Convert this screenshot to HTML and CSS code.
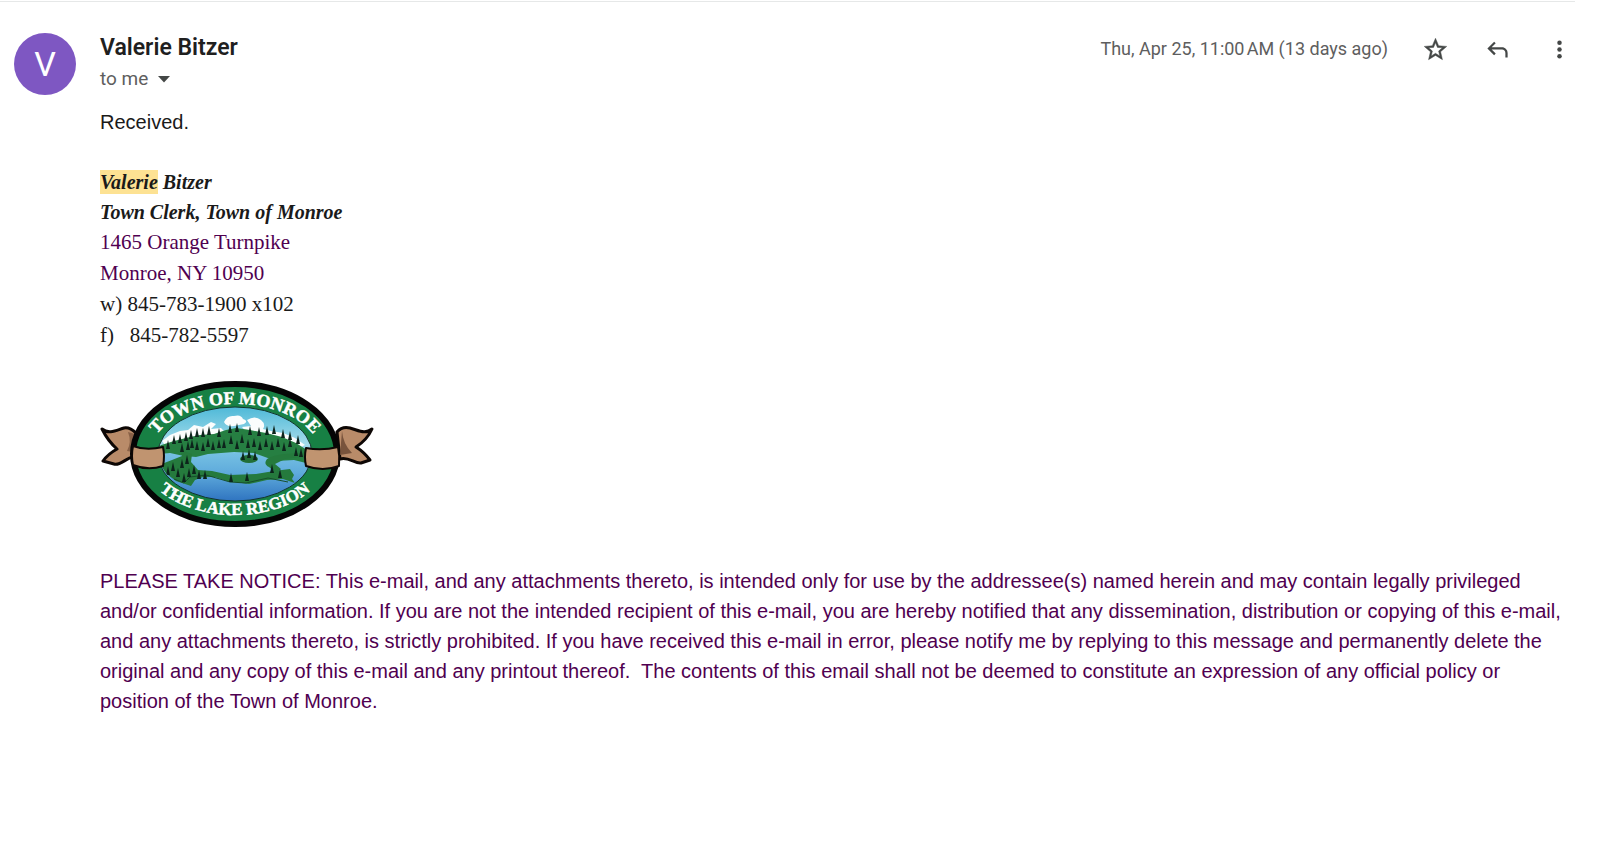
FILE: index.html
```html
<!DOCTYPE html>
<html lang="en">
<head>
    <meta charset="UTF-8">
    <meta name="viewport" content="width=device-width, initial-scale=1.0">
    <title>Valerie Bitzer</title>
    <link rel="stylesheet" href="styles.css">
</head>
<body>
    <article class="message">
        <div class="avatar">V</div>
        <div class="content">
            <header class="header">
                <div class="sender">
                    <h3 class="name">Valerie Bitzer</h3>
                    <button class="recipients" type="button">
                        to me
                        <svg class="caret" viewBox="0 0 12 7" aria-hidden="true"><path d="M0 0h12L6 6.5z"/></svg>
                    </button>
                </div>
                <div class="meta">
                    <time class="date" datetime="2024-04-25T11:00">Thu, Apr 25, 11:00&#8239;AM (13 days ago)</time>
                    <button class="icon-btn" type="button" aria-label="Star">
                        <svg viewBox="0 0 24 24" stroke="currentColor" stroke-width="0.4"><path d="M22 9.24l-7.19-.62L12 2 9.19 8.63 2 9.24l5.46 4.73L5.82 21 12 17.27 18.18 21l-1.63-7.03L22 9.24zM12 15.4l-3.76 2.27 1-4.28-3.32-2.88 4.38-.38L12 6.1l1.71 4.04 4.38.38-3.32 2.88 1 4.28L12 15.4z"/></svg>
                    </button>
                    <button class="icon-btn" type="button" aria-label="Reply">
                        <svg viewBox="0 0 24 24"><path d="M19 19v-4c0-.83-.29-1.54-.88-2.12A2.89 2.89 0 0 0 16 12H6.83l3.59 3.6L9 17l-6-6 6-6 1.42 1.4L6.83 10H16c1.38 0 2.56.49 3.54 1.46A4.82 4.82 0 0 1 21 15v4z"/></svg>
                    </button>
                    <button class="icon-btn" type="button" aria-label="More">
                        <svg viewBox="0 0 24 24"><circle cx="12" cy="6" r="2"/><circle cx="12" cy="12" r="2"/><circle cx="12" cy="18" r="2"/></svg>
                    </button>
                </div>
            </header>

            <p class="text">Received.</p>

            <div class="signature">
                <p class="title"><mark>Valerie</mark> Bitzer</p>
                <p class="title">Town Clerk, Town of Monroe</p>
                <p class="address">1465 Orange Turnpike</p>
                <p class="address">Monroe, NY 10950</p>
                <p>w) 845-783-1900 x102</p>
                <p>f)&nbsp;&nbsp; 845-782-5597</p>
            </div>

            <svg class="logo" viewBox="0 0 274 148" role="img" aria-label="Town of Monroe, The Lake Region">
                <defs>
                    <linearGradient id="sky" x1="0" y1="0" x2="0" y2="1">
                        <stop offset="0" stop-color="#4fb9d8"/>
                        <stop offset="0.4" stop-color="#a5dcea"/>
                        <stop offset="0.5" stop-color="#74bfe2"/>
                        <stop offset="0.7" stop-color="#5fabdc"/>
                        <stop offset="1" stop-color="#2f74c0"/>
                    </linearGradient>
                    <clipPath id="scene"><ellipse cx="135" cy="74" rx="76" ry="46"/></clipPath>
                    <path id="arcTop" d="M50 74a85 50 0 0 1 170 0"/>
                    <path id="arcBottom" d="M40 73a95 62 0 0 0 190 0"/>
                    <path id="tree" d="M0-5L2 4H-2z"/>
                </defs>

                <!-- ribbon tails -->
                <g fill="#b98b69" stroke="#0d0705" stroke-width="3" stroke-linejoin="round">
                    <path d="M2 49C9 55 17 50 24 48Q30 47 36 53L33 77C26 78 20 86 14 84L3 81Q8 74 17 69Q8 61 2 49z"/>
                    <path d="M272 49C265 55 258 50 250 48Q242 46 237 52L240 79C248 76 255 84 261 83L270 80Q264 72 256 67Q267 60 272 49z"/>
                </g>
                <path d="M28 52l7 2-2 18-6-1q5-9 1-19z" fill="#8a6248"/>
                <path d="M242 51q1 13 10 22l-12 2z" fill="#78533c"/>

                <ellipse cx="135" cy="74" rx="102" ry="70" fill="#178044" stroke="#050505" stroke-width="6"/>
                <ellipse cx="135" cy="74" rx="77" ry="47" fill="url(#sky)" stroke="#12342b" stroke-width="1"/>

                <g clip-path="url(#scene)">
                    <!-- clouds -->
                    <g fill="#fbfdfd">
                        <path d="M62 61l8-6 10-4 8-1 6-5 9 2 8-5 5 2-5 5 10-1 6 6-62 11z"/>
                        <path d="M124 42q3-7 10-6 7-2 9 3 6 2 1 5l-10 2q-8 1-10-4z"/>
                        <path d="M147 40q8-5 14 0 5 4 2 9l8 2 12 2 12 5 10 7-4 2-53-13-6-7 9-1z"/>
                    </g>
                    <!-- hills -->
                    <path d="M58 66l16-5 16-4 10-2 14-1 12-4 10-2 14 2 16 3 16 4 14 6 14 9v12l-16-4-18 1-22-8-20-1-26 2-12 3-12-1-14-3-12 1z" fill="#267f42"/>
                    <!-- near shore and peninsula -->
                    <path d="M56 86l16-6 10-4-2-6 12 4-1 8 7 8 14 1 18 4 26-1 18-3 16-2 4 6-2 4 3 4-12-4-16 1-18 4-22-3-12-4-12 0-8 3-4 6-15-5z" fill="#257a3d"/>
                    <path d="M213 72l-28 2q-12 1-18 5-4 5 2 8l7 6 5-4-6-5 10-5 16-2 12 2z" fill="#257a3d"/>
                    <path d="M74 99l10 4 6-6 16-2 24 7 16 1 22-5 20 4" fill="none" stroke="#174f2b" stroke-width="1"/>
                    <ellipse cx="149" cy="79" rx="9" ry="4" fill="#226f38"/>
                    <g fill="#0c241b">
                        <use href="#tree" x="68" y="65"/><use href="#tree" x="74" y="60"/><use href="#tree" x="80" y="59"/>
                        <use href="#tree" x="86" y="57"/><use href="#tree" x="91" y="55"/><use href="#tree" x="97" y="53"/>
                        <use href="#tree" x="103" y="53"/><use href="#tree" x="109" y="51"/><use href="#tree" x="119" y="53"/>
                        <use href="#tree" x="130" y="49"/><use href="#tree" x="137" y="48"/><use href="#tree" x="150" y="51"/>
                        <use href="#tree" x="159" y="52"/><use href="#tree" x="167" y="51"/><use href="#tree" x="174" y="50"/>
                        <use href="#tree" x="183" y="54"/><use href="#tree" x="190" y="56"/><use href="#tree" x="198" y="60"/>
                        <use href="#tree" x="82" y="68"/><use href="#tree" x="88" y="66"/><use href="#tree" x="92" y="64"/>
                        <use href="#tree" x="97" y="66"/><use href="#tree" x="103" y="67"/><use href="#tree" x="108" y="63"/>
                        <use href="#tree" x="113" y="66"/><use href="#tree" x="119" y="64"/><use href="#tree" x="124" y="64"/>
                        <use href="#tree" x="131" y="60"/><use href="#tree" x="137" y="65"/><use href="#tree" x="142" y="59"/>
                        <use href="#tree" x="148" y="64"/><use href="#tree" x="154" y="63"/><use href="#tree" x="160" y="66"/>
                        <use href="#tree" x="166" y="63"/><use href="#tree" x="172" y="66"/><use href="#tree" x="178" y="63"/>
                        <use href="#tree" x="184" y="67"/><use href="#tree" x="190" y="63"/><use href="#tree" x="196" y="72"/>
                        <use href="#tree" x="201" y="73"/><use href="#tree" x="143" y="76"/><use href="#tree" x="149" y="74"/>
                        <use href="#tree" x="155" y="76"/><use href="#tree" x="68" y="91"/><use href="#tree" x="73" y="87"/>
                        <use href="#tree" x="82" y="84"/><use href="#tree" x="87" y="80"/><use href="#tree" x="78" y="93"/>
                        <use href="#tree" x="84" y="98"/><use href="#tree" x="89" y="93"/><use href="#tree" x="94" y="90"/>
                        <use href="#tree" x="99" y="95"/><use href="#tree" x="105" y="95"/><use href="#tree" x="172" y="89"/>
                        <use href="#tree" x="180" y="94"/><use href="#tree" x="147" y="97"/><use href="#tree" x="131" y="98"/>
                    </g>
                </g>

                <text class="logo-text"><textPath href="#arcTop" startOffset="50%">TOWN OF MONROE</textPath></text>
                <text class="logo-text logo-text-small"><textPath href="#arcBottom" startOffset="50%">THE LAKE REGION</textPath></text>

                <!-- ribbon front -->
                <g fill="#c09470" stroke="#0d0705" stroke-width="2" stroke-linejoin="round">
                    <path d="M33 66Q46 71 63 67Q65 76 63 86Q48 91 33 85Q31 76 33 66z"/>
                    <path d="M206 68Q222 71 238 67Q240 76 239 86Q223 92 206 86Q204 77 206 68z"/>
                </g>
            </svg>

            <p class="text notice">PLEASE TAKE NOTICE: This e-mail, and any attachments thereto, is intended only for use by the addressee(s) named herein and may contain legally privileged and/or confidential information. If you are not the intended recipient of this e-mail, you are hereby notified that any dissemination, distribution or copying of this e-mail, and any attachments thereto, is strictly prohibited. If you have received this e-mail in error, please notify me by replying to this message and permanently delete the original and any copy of this e-mail and any printout thereof.&nbsp; The contents of this email shall not be deemed to constitute an expression of any official policy or position of the Town of Monroe.</p>
        </div>
    </article>
</body>
</html>
```
FILE: styles.css
```css
body { margin: 0; background: #fff; color: #1f1f1f; font-family: "Liberation Sans", Arial, sans-serif; }
p, h3 { margin: 0; }
button { background: none; border: none; padding: 0; color: inherit; font: inherit; cursor: pointer; }

.message { display: flex; gap: 24px; margin: 1px 25px 0 0; padding: 31px 0 0 14px; border-top: 1px solid #e6e8e8; }
.avatar { flex: none; width: 62px; height: 62px; border-radius: 50%; background: #7e57c2; color: #fff; font: 34px/62px Roboto, sans-serif; text-align: center; }
.content { flex: 1; min-width: 0; }

.header { display: flex; justify-content: space-between; align-items: flex-start; margin-bottom: 12px; font-family: Roboto, sans-serif; }
.name { font-size: 23px; line-height: 30px; font-weight: 600; }
.recipients { display: flex; align-items: center; gap: 10px; color: #5e5e5e; font-size: 19px; line-height: 32px; }
.caret { width: 12px; height: 7px; fill: #444746; }
.meta { display: flex; align-items: center; height: 32px; color: #5e5e5e; }
.date { margin-right: 34px; font-size: 18px; line-height: 32px; }
.icon-btn { display: flex; margin-right: 35px; color: #444746; }
.icon-btn:last-child { margin-right: 2px; }
.icon-btn svg { width: 27px; height: 27px; fill: currentColor; }

.text { color: #1a1a1a; font-size: 20px; line-height: 30px; }
.signature { margin: 30px 0 29px; color: #1a1a1a; font: 21px/31px "Liberation Serif", "Times New Roman", serif; }
.title { font-size: 20px; line-height: 30px; font-weight: bold; font-style: italic; }
.signature .address, .notice { color: #500050; }
mark { padding: 1px 0; background: #fde293; color: inherit; }

.logo { display: block; width: 274px; height: 148px; }
.logo-text { fill: #fff; stroke: #fff; stroke-width: 0.5px; font: bold 18px "Liberation Serif", serif; text-anchor: middle; }
.logo-text-small { font-size: 17px; }
.notice { margin-top: 38px; padding-right: 8px; }
```
